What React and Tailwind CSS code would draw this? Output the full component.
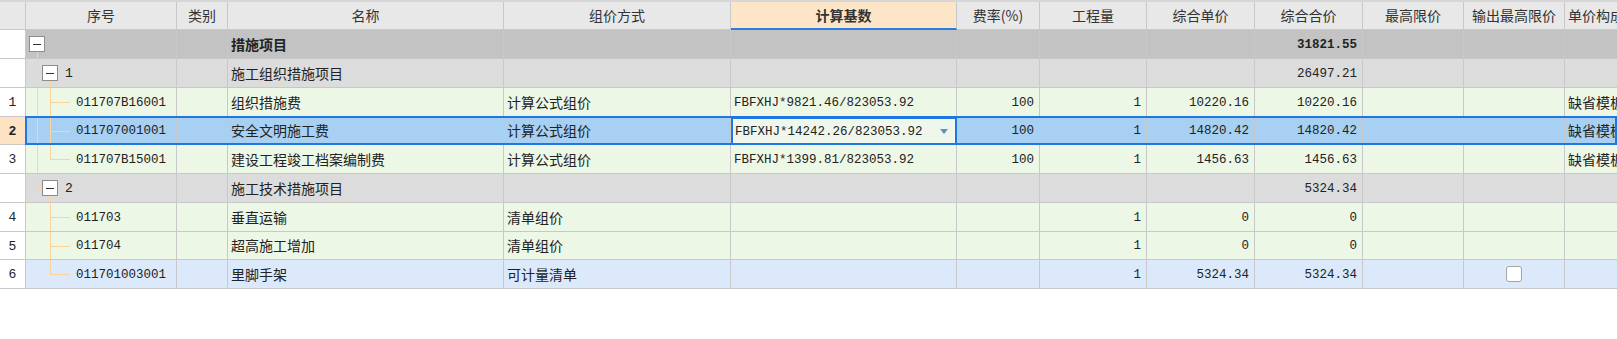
import React from 'react';

const cn = "font-['Noto_Sans_CJK_SC',sans-serif]";
const mono = "font-['Liberation_Mono','Noto_Sans_CJK_SC',monospace]";

const headers = ['序号', '类别', '名称', '组价方式', '计算基数', '费率(%)', '工程量', '综合单价', '综合合价', '最高限价', '输出最高限价', '单价构成文件'];

const rows = [
    { kind: 'root', h: 'h-[29px]', num: '', code: '', name: '措施项目', total: '31821.55', tree: { box: 0, v0: 'bottom' } },
    { kind: 'group', h: 'h-[29px]', num: '', code: '1', name: '施工组织措施项目', total: '26497.21', tree: { v0: 'full', box: 1, v1: 'bottom' } },
    { kind: 'leaf', h: 'h-[29px]', num: '1', code: '011707B16001', name: '组织措施费', method: '计算公式组价', base: 'FBFXHJ*9821.46/823053.92', rate: '100', qty: '1', unit: '10220.16', total: '10220.16', tpl: '缺省模板', tree: { v0: 'full', v1: 'full', leaf: true } },
    { kind: 'leaf', selected: true, h: 'h-[28px]', num: '2', code: '011707001001', name: '安全文明施工费', method: '计算公式组价', base: 'FBFXHJ*14242.26/823053.92', rate: '100', qty: '1', unit: '14820.42', total: '14820.42', tpl: '缺省模板', tree: { v0: 'full', v1: 'full', leaf: true } },
    { kind: 'leaf', h: 'h-[29px]', num: '3', code: '011707B15001', name: '建设工程竣工档案编制费', method: '计算公式组价', base: 'FBFXHJ*1399.81/823053.92', rate: '100', qty: '1', unit: '1456.63', total: '1456.63', tpl: '缺省模板', tree: { v0: 'full', v1: 'top', leaf: true } },
    { kind: 'group', h: 'h-[29px]', num: '', code: '2', name: '施工技术措施项目', total: '5324.34', tree: { v0: 'top', box: 1, v1: 'bottom' } },
    { kind: 'leaf', h: 'h-[29px]', num: '4', code: '011703', name: '垂直运输', method: '清单组价', qty: '1', unit: '0', total: '0', tree: { v1: 'full', leaf: true } },
    { kind: 'leaf', h: 'h-[28px]', num: '5', code: '011704', name: '超高施工增加', method: '清单组价', qty: '1', unit: '0', total: '0', tree: { v1: 'full', leaf: true } },
    { kind: 'item', h: 'h-[29px]', num: '6', code: '011701003001', name: '里脚手架', method: '可计量清单', qty: '1', unit: '5324.34', total: '5324.34', check: true, tree: { v1: 'top', leaf: true } },
];

const grid = 'grid grid-cols-[26px_151px_51px_276px_227px_226px_83px_107px_108px_108px_101px_101px_120px]';

const rowBg = {
    root: 'bg-[#c3c3c3]',
    group: 'bg-[#dcdcdc]',
    leaf: 'bg-[#edf7e6]',
    item: 'bg-[#dce9fb]',
};

const Cell = ({ className = '', children }) => (
    <div className={`border-r border-b border-[#c8c8c8] flex items-center overflow-hidden whitespace-nowrap ${className}`}>{children}</div>
);

const VLine = ({ left, part }) => {
    const pos = part === 'full' ? 'top-0 bottom-0' : part === 'top' ? 'top-0 h-1/2' : 'top-1/2 bottom-0';
    return <span className={`absolute w-px bg-[#fbd49c] ${pos} ${left}`}></span>;
};

const Box = ({ level }) => (
    <span className={`absolute top-1/2 -translate-y-1/2 w-4 h-4 bg-white border border-[#8c8c8c] flex items-center justify-center ${level === 0 ? 'left-[3px]' : 'left-[16px]'}`}>
        <span className="w-2 h-px bg-[#333]"></span>
    </span>
);

const TreeCell = ({ row }) => {
    const t = row.tree;
    return (
        <Cell className="relative">
            {t.v0 && <VLine left="left-[11px]" part={t.v0} />}
            {t.v1 && <VLine left="left-[24px]" part={t.v1} />}
            {t.box === 1 && <span className="absolute left-[11px] top-1/2 w-[5px] h-px bg-[#fbd49c]"></span>}
            {t.leaf && <span className="absolute left-[24px] top-1/2 w-5 h-px bg-[#fbd49c]"></span>}
            {t.box !== undefined && <Box level={t.box} />}
            {row.kind === 'group' && <span className={`${mono} absolute left-[39px] mt-[2px] text-[13px] text-[#222]`}>{row.code}</span>}
            {(row.kind === 'leaf' || row.kind === 'item') && <span className={`${mono} absolute left-[50px] mt-[2px] text-[12.5px] text-[#222]`}>{row.code}</span>}
        </Cell>
    );
};

const Num = ({ children, bold }) => (
    <Cell className={`justify-end pr-[5px] pt-[2px] ${mono} text-[12.5px] text-[#222] ${bold ? 'font-bold' : ''}`}>{children}</Cell>
);

export default function App() {
    return (
        <div className="w-[1617px] h-[339px] bg-white overflow-hidden">
            <div className={`${grid} h-[30px] border-t-2 border-[#d6d6d6] bg-[#e8e8e8] ${cn} text-[14px] text-[#333]`}>
                <Cell />
                {headers.map((h, i) => (
                    h === '计算基数' ? (
                        <div key={h} className="bg-[#fde6c8] border-r border-[#c8c8c8] border-b-2 border-b-[#2a7be4] flex items-center justify-center font-bold">{h}</div>
                    ) : (
                        <Cell key={h} className={i === headers.length - 1 ? 'pl-[3px]' : 'justify-center'}>{h}</Cell>
                    )
                ))}
            </div>

            {rows.map((r, idx) => {
                const bg = r.selected ? 'bg-[#a8d0f3]' : rowBg[r.kind];
                return (
                    <div key={idx} className={`${grid} ${r.h} relative ${cn} text-[14px] text-[#222]`}>
                        <Cell className={`justify-center pt-[2px] ${mono} text-[13px] ${r.selected ? 'bg-[#fde3c4] font-bold' : 'bg-white'}`}>{r.num}</Cell>
                        <div className={`col-span-12 grid grid-cols-[151px_51px_276px_227px_226px_83px_107px_108px_108px_101px_101px_120px] ${bg}`}>
                            <TreeCell row={r} />
                            <Cell />
                            <Cell className={`pl-[3px] ${r.kind === 'root' ? 'font-bold' : ''}`}>{r.name}</Cell>
                            <Cell className="pl-[3px]">{r.method}</Cell>
                            {r.selected ? (
                                <div className="border-2 border-[#1f77e4] bg-[#eff6ec] flex items-center justify-between pl-[2px] pr-[7px]">
                                    <span className={`${mono} pt-[2px] text-[12.5px]`}>{r.base}</span>
                                    <span className="w-0 h-0 border-l-4 border-r-4 border-t-[5px] border-l-transparent border-r-transparent border-t-[#5b8fc7]"></span>
                                </div>
                            ) : (
                                <Cell className={`pl-[3px] pt-[2px] ${mono} text-[12.5px]`}>{r.base}</Cell>
                            )}
                            <Num>{r.rate}</Num>
                            <Num>{r.qty}</Num>
                            <Num>{r.unit}</Num>
                            <Num bold={r.kind === 'root'}>{r.total}</Num>
                            <Cell />
                            <Cell className="justify-center">
                                {r.check && <span className="w-4 h-4 bg-white border border-[#a4a4a4] rounded-[3px]"></span>}
                            </Cell>
                            <Cell className="pl-[3px]">{r.tpl}</Cell>
                        </div>
                        {r.selected && (
                            <div className="absolute left-[25px] right-0 -top-px bottom-0 border-2 border-[#1f77e4] pointer-events-none"></div>
                        )}
                    </div>
                );
            })}
        </div>
    );
}
